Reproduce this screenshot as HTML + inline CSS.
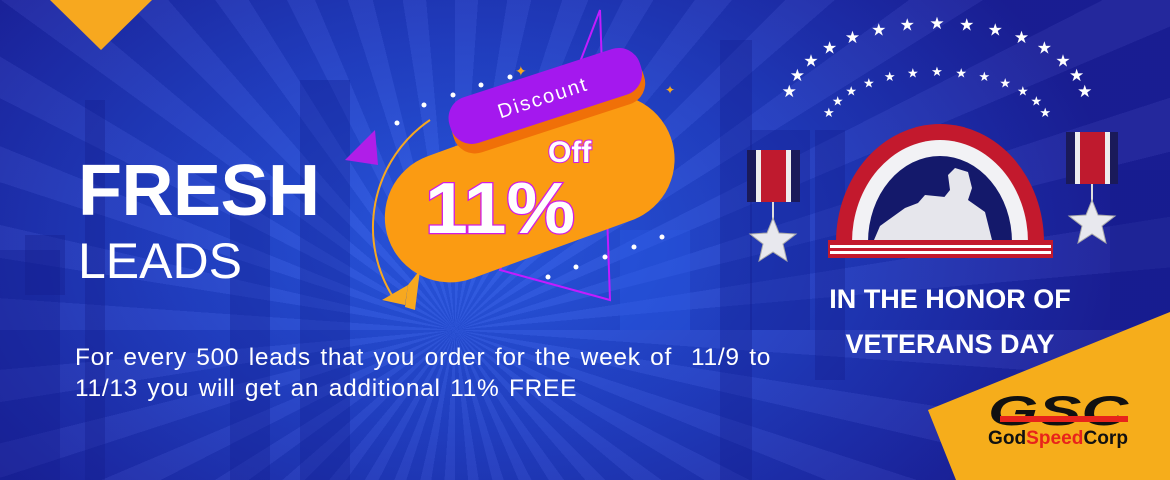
<!DOCTYPE html>
<html><head><meta charset="utf-8"><style>
*{margin:0;padding:0}
body{width:1170px;height:480px;overflow:hidden;position:relative;font-family:"Liberation Sans",sans-serif}
#bg{position:absolute;inset:0;background:
 repeating-conic-gradient(from 0deg at 455px 330px, rgba(255,255,255,0.045) 0deg 4deg, rgba(0,0,0,0.045) 4deg 9deg),
 radial-gradient(ellipse 650px 420px at 470px 240px,#2a5ae6 0%,#2140c6 45%,#1a1e98 100%);}
.b{position:absolute;background:rgba(20,30,140,0.35)}
.t{position:absolute;color:#fff}
</style></head><body>
<div id="bg"></div>
<div class="b" style="left:0;top:250px;width:60px;height:230px"></div>
<div class="b" style="left:25px;top:235px;width:40px;height:60px"></div>
<div class="b" style="left:85px;top:100px;width:20px;height:380px"></div>
<div class="b" style="left:230px;top:180px;width:40px;height:300px"></div>
<div class="b" style="left:300px;top:80px;width:50px;height:400px"></div>
<div class="b" style="left:720px;top:40px;width:32px;height:440px"></div>
<div class="b" style="left:750px;top:130px;width:60px;height:200px"></div>
<div class="b" style="left:815px;top:130px;width:30px;height:250px"></div>
<div class="b" style="left:1110px;top:170px;width:60px;height:150px"></div>
<div class="b" style="left:620px;top:230px;width:70px;height:100px;background:rgba(40,90,230,0.4)"></div>
<svg style="position:absolute;left:0;top:0" width="1170" height="480">
<polygon points="50,0 152,0 101,50" fill="#f7a81f"/>
<polygon points="928,410 1170,312 1170,480 956,480" fill="#f6ad1b"/>
<polygon points="600,10 610,300 500,270" fill="none" stroke="#c21cff" stroke-width="2"/>
<polygon points="345,160 375,130 378,165" fill="#b01ee8"/>
<polygon points="382,300 408,285 405,305" fill="#f7a81f"/>
<polygon points="408,285 420,270 415,310 405,307" fill="#f7a81f"/>
<circle cx="397" cy="123" r="2.5" fill="#fff"/><circle cx="424" cy="105" r="2.5" fill="#fff"/>
<circle cx="453" cy="95" r="2.5" fill="#fff"/><circle cx="481" cy="85" r="2.5" fill="#fff"/>
<circle cx="510" cy="77" r="2.5" fill="#fff"/>
<circle cx="548" cy="277" r="2.5" fill="#fff"/><circle cx="576" cy="267" r="2.5" fill="#fff"/>
<circle cx="605" cy="257" r="2.5" fill="#fff"/><circle cx="634" cy="247" r="2.5" fill="#fff"/><circle cx="662" cy="237" r="2.5" fill="#fff"/>
<text x="515" y="76" fill="#f7a81f" font-size="14" font-family="Liberation Sans">✦</text>
<text x="665" y="94" fill="#f7a81f" font-size="12" font-family="Liberation Sans">✦</text>
<path d="M395,300 A130,130 0 0 1 430,120" fill="none" stroke="#f7a81f" stroke-width="2"/>
<g transform="rotate(-20 525 190)">
<rect x="380" y="125" width="300" height="130" rx="65" fill="#fb9b12"/>
</g>
<g transform="rotate(-18 545 95)">
<rect x="445" y="82" width="200" height="48" rx="22" fill="#f07008"/>
<rect x="445" y="72" width="200" height="48" rx="22" fill="#a418ee"/>
</g>
<text transform="translate(545,104) rotate(-18)" text-anchor="middle" fill="#fff" font-size="20" font-family="Liberation Sans" letter-spacing="2">Discount</text>
<text x="548" y="162" fill="#fff" stroke="#d11ce6" stroke-width="2" paint-order="stroke" font-size="30" font-weight="bold" font-family="Liberation Sans">Off</text>
<text x="425" y="233" fill="#fff" stroke="#d11ce6" stroke-width="2.5" paint-order="stroke" font-size="72" font-weight="bold" font-family="Liberation Sans" textLength="150" lengthAdjust="spacingAndGlyphs">11%</text>
<g id="stars" fill="#fff" font-family="DejaVu Sans" font-size="17" text-anchor="middle"></g>
<path d="M836,242 A104,118 0 0 1 1044,242 Z" fill="#c3192d"/>
<path d="M852,242 A88,102 0 0 1 1028,242 Z" fill="#f2f2f5"/>
<path d="M868,242 A72,86 0 0 1 1012,242 Z" fill="#14196b"/>
<path d="M874,240 L880,226 L905,208 L918,203 L925,195 L945,197 L942,200 L950,190 L948,175 L955,168 L968,172 L972,188 L968,200 L985,212 L992,240 Z" fill="#e6e6ec"/>
<rect x="828" y="240" width="225" height="18" fill="#c3192d"/>
<rect x="830" y="245" width="221" height="3" fill="#fff"/>
<rect x="830" y="251" width="221" height="3" fill="#fff"/>
<rect x="747" y="150" width="53" height="52" fill="#1a1a5a"/>
<rect x="756" y="150" width="35" height="52" fill="#eee"/>
<rect x="761" y="150" width="25" height="52" fill="#bf1a2e"/>
<line x1="773" y1="202" x2="773" y2="222" stroke="#ddd" stroke-width="2"/>
<polygon points="773,218 779,233 796,234 783,244 787,261 773,252 759,261 763,244 750,234 767,233" fill="#e8e8ee" stroke="#aaa"/>
<rect x="1066" y="132" width="52" height="52" fill="#1a1a5a"/>
<rect x="1075" y="132" width="35" height="52" fill="#eee"/>
<rect x="1080" y="132" width="25" height="52" fill="#bf1a2e"/>
<line x1="1092" y1="184" x2="1092" y2="203" stroke="#ddd" stroke-width="2"/>
<polygon points="1092,200 1098,215 1115,216 1102,226 1106,243 1092,234 1078,243 1082,226 1069,216 1086,215" fill="#e8e8ee" stroke="#aaa"/>
<text x="950" y="308" text-anchor="middle" fill="#fff" font-size="27" font-weight="bold" font-family="Liberation Sans">IN THE HONOR OF</text>
<text x="950" y="353" text-anchor="middle" fill="#fff" font-size="27" font-weight="bold" font-family="Liberation Sans">VETERANS DAY</text>
<text x="988" y="425" fill="#111" font-size="42" font-weight="900" font-family="Liberation Sans" font-style="italic" textLength="140" lengthAdjust="spacingAndGlyphs">GSC</text>
<rect x="1000" y="416" width="128" height="6" fill="#e8231b"/>
<text x="988" y="444" fill="#111" font-size="19" font-weight="bold" font-family="Liberation Sans" textLength="140" lengthAdjust="spacingAndGlyphs"><tspan>God</tspan><tspan fill="#e8231b">Speed</tspan><tspan>Corp</tspan></text>
</svg>
<div class="t" style="left:78px;top:150px;font-size:72px;font-weight:bold;letter-spacing:-0.5px">FRESH</div>
<div class="t" style="left:78px;top:232px;font-size:50px">LEADS</div>
<div class="t" style="left:75px;top:342px;font-size:24.5px;line-height:31px;letter-spacing:0.7px;word-spacing:2px;width:800px;white-space:nowrap">For every 500 leads that you order for the week of&nbsp; 11/9 to<br>11/13 you will get an additional 11% FREE</div>
<script>
var g=document.getElementById('stars'),s='';
function arc(cx,cy,rx,ry,n,a0,a1){for(var i=0;i<n;i++){var a=(a0+(a1-a0)*i/(n-1))*Math.PI/180;var x=cx+rx*Math.cos(a),y=cy-ry*Math.sin(a);s+='<text x="'+x.toFixed(1)+'" y="'+(y+6).toFixed(1)+'">★</text>';}}
arc(937,105,150,82,15,170,10);
g.innerHTML=s;s='';
var g2=document.createElementNS('http://www.w3.org/2000/svg','g');g2.setAttribute('fill','#fff');g2.setAttribute('font-size','13');g2.setAttribute('text-anchor','middle');g2.setAttribute('font-family','DejaVu Sans');g.parentNode.appendChild(g2);
arc(937,125,112,55,13,165,15);g2.innerHTML=s;
</script>
</body></html>
